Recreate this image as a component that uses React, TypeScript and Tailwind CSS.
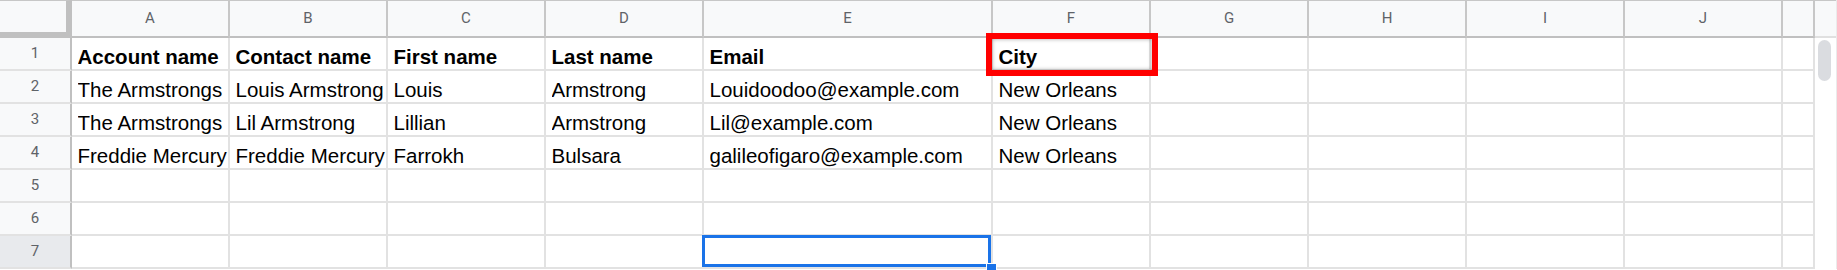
import React from 'react';

const columns = ['A', 'B', 'C', 'D', 'E', 'F', 'G', 'H', 'I', 'J', ''];

const data: string[][] = [
    ['Account name', 'Contact name', 'First name', 'Last name', 'Email', 'City'],
    ['The Armstrongs', 'Louis Armstrong', 'Louis', 'Armstrong', 'Louidoodoo@example.com', 'New Orleans'],
    ['The Armstrongs', 'Lil Armstrong', 'Lillian', 'Armstrong', 'Lil@example.com', 'New Orleans'],
    ['Freddie Mercury', 'Freddie Mercury', 'Farrokh', 'Bulsara', 'galileofigaro@example.com', 'New Orleans'],
    [],
    [],
    [],
];

// selected cell is E7
const selRow = 6;
const selCol = 4;

const headerCell = 'flex items-center justify-center bg-[#f8f9fa] border-t border-t-[#c7c7c7] border-r-2 border-r-[#c7c7c7] border-b-2 border-b-[#c0c0c0] font-[Roboto] text-[15px] text-[#5f6368]';
const rowHeadCell = 'flex items-center justify-center border-r-2 border-r-[#c0c0c0] border-b-2 border-b-[#e2e2e2] font-[Roboto] text-[15px] text-[#5f6368]';
const cellClass = 'relative flex items-end border-r-2 border-b-2 border-[#e2e2e2] bg-white pl-[5.5px] pb-[1px] text-[20.5px] leading-[23px] text-black';

const App: React.FC = () => {
    return (
        <div className="h-[270px] w-[1837px] overflow-hidden bg-white font-['Liberation_Sans',Arial,sans-serif]">
            <div className="grid grid-cols-[72px_158px_158px_158px_158px_289px_158px_158px_158px_158px_158px_32px_22px] grid-rows-[38px_repeat(7,33px)]">
                {/* corner */}
                <div className="bg-[#f8f9fa] border-t border-t-[#c7c7c7] border-r-[6px] border-b-[6px] border-r-[#c0c0c0] border-b-[#c0c0c0]" />

                {columns.map((c, i) => (
                    <div key={c + i} className={`${headerCell} ${i === selCol ? 'bg-[#e8eaed]' : ''}`}>
                        {c}
                    </div>
                ))}

                {/* vertical scrollbar */}
                <div className="row-span-8 flex flex-col border-r border-r-[#ebebeb]">
                    <div className="h-[38px] shrink-0 bg-[#f8f9fa] border-t border-t-[#c7c7c7] border-b-2 border-b-[#e0e0e0]" />
                    <div className="flex-1 bg-white pl-[3px] pt-[2px]">
                        <div className="h-[41px] w-[13px] rounded-full bg-[#dadce0]" />
                    </div>
                </div>

                {data.map((row, r) => (
                    <React.Fragment key={r}>
                        <div className={`${rowHeadCell} ${r === selRow ? 'bg-[#e8eaed] border-r-[#b0b0b0] text-[#3c4043]' : 'bg-[#f8f9fa]'}`}>
                            {r + 1}
                        </div>
                        {columns.map((_, c) => (
                            <div key={c} className={`${cellClass} ${r === 0 ? 'font-bold' : ''}`}>
                                <span className="block w-full overflow-hidden whitespace-nowrap">{row[c] ?? ''}</span>

                                {r === 0 && c === 5 && (
                                    <div className="pointer-events-none absolute -left-[7px] -top-[5px] -right-[9px] -bottom-[7px] z-10 border-[6px] border-[#ff0000] shadow-[inset_0_0_4px_rgba(0,0,0,0.35)]" />
                                )}

                                {r === selRow && c === selCol && (
                                    <>
                                        <div className="pointer-events-none absolute -left-[2px] -top-[1px] right-0 bottom-0 z-10 border-[3px] border-[#1a73e8]" />
                                        <div className="absolute left-[282px] top-[27px] z-20 h-[11px] w-[11px] border border-white bg-[#1a73e8]" />
                                    </>
                                )}
                            </div>
                        ))}
                    </React.Fragment>
                ))}
            </div>
        </div>
    );
};

export default App;
